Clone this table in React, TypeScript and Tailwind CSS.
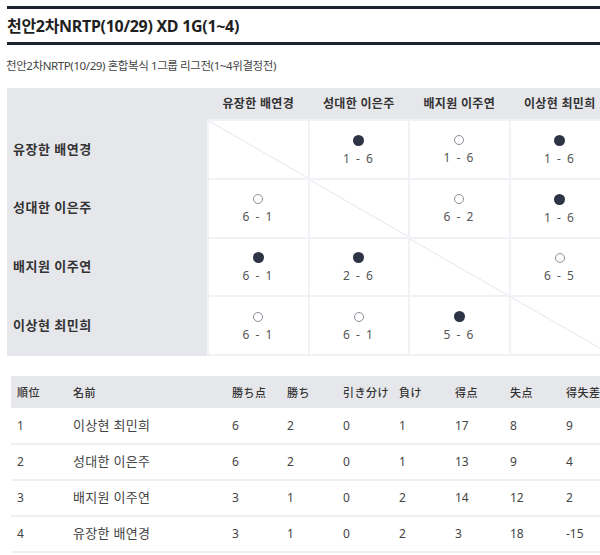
import React from "react";

type Mark = { win: boolean; score: string } | null;

const players = ["유장한 배연경", "성대한 이은주", "배지원 이주연", "이상현 최민희"];

// null on the diagonal, filled dot = loss shown as dark, hollow = win
const matrix: Mark[][] = [
  [null, { win: false, score: "1 - 6" }, { win: true, score: "1 - 6" }, { win: false, score: "1 - 6" }],
  [{ win: true, score: "6 - 1" }, null, { win: true, score: "6 - 2" }, { win: false, score: "1 - 6" }],
  [{ win: false, score: "6 - 1" }, { win: false, score: "2 - 6" }, null, { win: true, score: "6 - 5" }],
  [{ win: true, score: "6 - 1" }, { win: true, score: "6 - 1" }, { win: false, score: "5 - 6" }, null],
];

const standings = [
  ["1", "이상현 최민희", "6", "2", "0", "1", "17", "8", "9"],
  ["2", "성대한 이은주", "6", "2", "0", "1", "13", "9", "4"],
  ["3", "배지원 이주연", "3", "1", "0", "2", "14", "12", "2"],
  ["4", "유장한 배연경", "3", "1", "0", "2", "3", "18", "-15"],
];

const heads = ["順位", "名前", "勝ち点", "勝ち", "引き分け", "負け", "得点", "失点", "得失差"];
const colW = ["w-[56px]", "w-[159px]", "w-[55px]", "w-[56px]", "w-[56px]", "w-[56px]", "w-[55px]", "w-[56px]", "w-[56px]"];

const font = "font-['Noto_Sans','Noto_Sans_CJK_KR',sans-serif]";

function Dot({ win }: { win: boolean }) {
  return win ? (
    <span className="block w-[10px] h-[10px] rounded-full border border-[#8a8f98] bg-white" />
  ) : (
    <span className="block w-[11px] h-[11px] rounded-full bg-[#2d3446]" />
  );
}

export default function App() {
  return (
    <div className={`w-[600px] h-[555px] overflow-hidden bg-white text-[#333] ${font}`}>
      <div className="pl-[7px] pt-[6px]">
        {/* Title */}
        <div className="border-t-[3px] border-b-[3px] border-[#1c2230] h-[39px] flex items-center">
          <h1 className="text-[16px] font-bold text-[#1f1f1f] tracking-[-0.3px]">
            천안2차NRTP(10/29) XD 1G(1~4)
          </h1>
        </div>
        <p className="mt-[13px] -ml-[1px] text-[11.5px] text-[#444] tracking-[-0.4px] leading-[16px]">
          천안2차NRTP(10/29) 혼합복식 1그룹 리그전(1~4위결정전)
        </p>

        {/* Match matrix */}
        <table className="mt-[14px] table-fixed border-collapse w-[603px] bg-[#e6e7eb]">
          <colgroup>
            <col className="w-[201px]" />
            <col className="w-[100.5px]" />
            <col className="w-[100.5px]" />
            <col className="w-[100.5px]" />
            <col className="w-[100.5px]" />
          </colgroup>
          <thead>
            <tr className="h-[32px]">
              <th />
              {players.map((p) => (
                <th key={p} className="text-[12px] font-bold text-[#333] text-center tracking-[0.3px]">
                  {p}
                </th>
              ))}
            </tr>
          </thead>
          <tbody>
            {players.map((p, r) => (
              <tr key={p} className="h-[58.75px]">
                <th className="text-left pl-[6px] text-[13px] font-bold text-[#333] tracking-[0.5px]">{p}</th>
                {matrix[r].map((m, c) => (
                  <td key={c} className="relative bg-white border-2 border-[#f1f2f5] p-0">
                    {m === null ? (
                      <svg className="absolute inset-0 w-full h-full" preserveAspectRatio="none" viewBox="0 0 100 100">
                        <line x1="0" y1="0" x2="100" y2="100" stroke="#e4e6ee" strokeWidth="1" vectorEffect="non-scaling-stroke" />
                      </svg>
                    ) : (
                      <div className="flex flex-col items-center gap-[5px] pt-[3px]">
                        <Dot win={m.win} />
                        <span className="text-[12px] text-[#555] tracking-[1.5px] leading-[16px]">{m.score}</span>
                      </div>
                    )}
                  </td>
                ))}
              </tr>
            ))}
          </tbody>
        </table>

        {/* Standings */}
        <table className="mt-[20px] ml-[4px] table-fixed border-collapse w-[605px]">
          <thead>
            <tr className="h-[32px] bg-[#e6e7eb]">
              {heads.map((h, i) => (
                <th
                  key={h}
                  className={`${colW[i]} text-left pl-[6px] text-[11px] font-medium text-[#333] font-['Noto_Sans_CJK_JP',sans-serif] tracking-[0.5px]`}
                >
                  {h}
                </th>
              ))}
            </tr>
          </thead>
          <tbody>
            {standings.map((row) => (
              <tr key={row[0]} className="h-[36px] border-b-2 border-[#eef0f3]">
                {row.map((v, i) => (
                  <td
                    key={i}
                    className={`pl-[6px] text-[#444] ${i === 1 ? "text-[13px] tracking-[0.3px]" : "text-[12px]"}`}
                  >
                    {v}
                  </td>
                ))}
              </tr>
            ))}
          </tbody>
        </table>
      </div>
    </div>
  );
}
